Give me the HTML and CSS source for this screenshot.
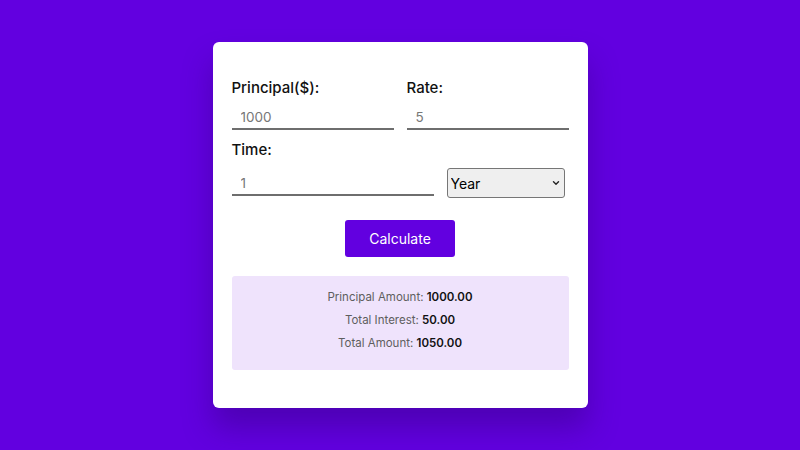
FILE: index.html
```html
<!DOCTYPE html>
<html lang="en">
<head>
<meta charset="utf-8">
<title>Simple Interest Calculator</title>
<link rel="stylesheet" href="styles.css">
</head>
<body>
<div class="card">
  <div class="row">
    <div class="field">
      <label class="label" for="principal">Principal($):</label>
      <input class="input" id="principal" type="number" value="1000">
    </div>
    <div class="field">
      <label class="label" for="rate">Rate:</label>
      <input class="input" id="rate" type="number" value="5">
    </div>
  </div>
  <div class="field time-field">
    <label class="label" for="time">Time:</label>
    <div class="time-row">
      <input class="input time-input" id="time" type="number" value="1">
      <div class="select-wrap">
        <select class="select" id="duration">
          <option>Year</option>
          <option>Month</option>
        </select>
        <svg class="chev" width="8" height="6" viewBox="0 0 8 6" aria-hidden="true"><path d="M1.5 1.8 L4 4.2 L6.5 1.8" fill="none" stroke="#222" stroke-width="1.4" stroke-linecap="round" stroke-linejoin="round"/></svg>
      </div>
    </div>
  </div>
  <div class="actions">
    <button class="btn" type="button">Calculate</button>
  </div>
  <div class="result">
    <p class="line">Principal Amount: <b>1000.00</b></p>
    <p class="line">Total Interest: <b>50.00</b></p>
    <p class="line">Total Amount: <b>1050.00</b></p>
  </div>
</div>
</body>
</html>
```
FILE: styles.css
```css
* { box-sizing: border-box; }
html, body { margin: 0; padding: 0; }
body {
  width: 800px;
  height: 450px;
  background: #6200e0;
  display: flex;
  align-items: center;
  justify-content: center;
  font-family: Inter, "Open Sans", sans-serif;
}
.card {
  width: 375px;
  height: 366px;
  background: #ffffff;
  border-radius: 6px;
  padding: 35px 19px 38px 19px;
  box-shadow: 0 20px 30px rgba(40, 0, 100, 0.35);
  display: flex;
  flex-direction: column;
}
.row {
  display: flex;
  gap: 13px;
}
.field {
  display: flex;
  flex-direction: column;
  flex: 1;
}
.label {
  font-size: 15px;
  font-weight: 500;
  color: #111;
  line-height: 22px;
  height: 22px;
}
.input {
  margin-top: 4px;
  width: 100%;
  font-family: inherit;
  font-size: 13.5px;
  color: #777;
  border: none;
  border-bottom: 2px solid #6e6e6e;
  padding: 3px 9px 0 9px;
  height: 27px;
  line-height: 22px;
  outline: none;
  background: transparent;
  -moz-appearance: textfield;
}
.input::-webkit-outer-spin-button,
.input::-webkit-inner-spin-button { -webkit-appearance: none; margin: 0; }
.time-field { margin-top: 9px; flex: none; }
.time-row {
  display: flex;
  align-items: flex-end;
  gap: 13px;
  margin-top: 7px;
}
.time-input { width: 202px; flex: none; margin-top: 0; }
.select-wrap {
  position: relative;
  width: 118px;
  height: 30px;
  margin-bottom: -2px;
}
.select {
  -webkit-appearance: none;
  appearance: none;
  width: 100%;
  height: 100%;
  font-family: inherit;
  font-size: 14px;
  color: #000;
  background: #efefef;
  border: 1px solid #767676;
  border-radius: 3px;
  padding: 0 3px;
}
.chev {
  position: absolute;
  right: 5px;
  top: 12px;
  pointer-events: none;
}
.actions {
  display: flex;
  justify-content: center;
  margin-top: 24px;
}
.btn {
  width: 110px;
  height: 37px;
  background: #6200e0;
  color: #fff;
  border: none;
  border-radius: 3px;
  font-family: inherit;
  font-size: 14px;
}
.result {
  margin-top: 19px;
  background: #efe3fc;
  border-radius: 3px;
  height: 94px;
  padding: 10px 0;
  display: flex;
  flex-direction: column;
  align-items: center;
}
.line {
  margin: 0;
  font-size: 11.5px;
  line-height: 23px;
  color: #5e5e5e;
}
.line b { color: #111; font-weight: 600; }
```
